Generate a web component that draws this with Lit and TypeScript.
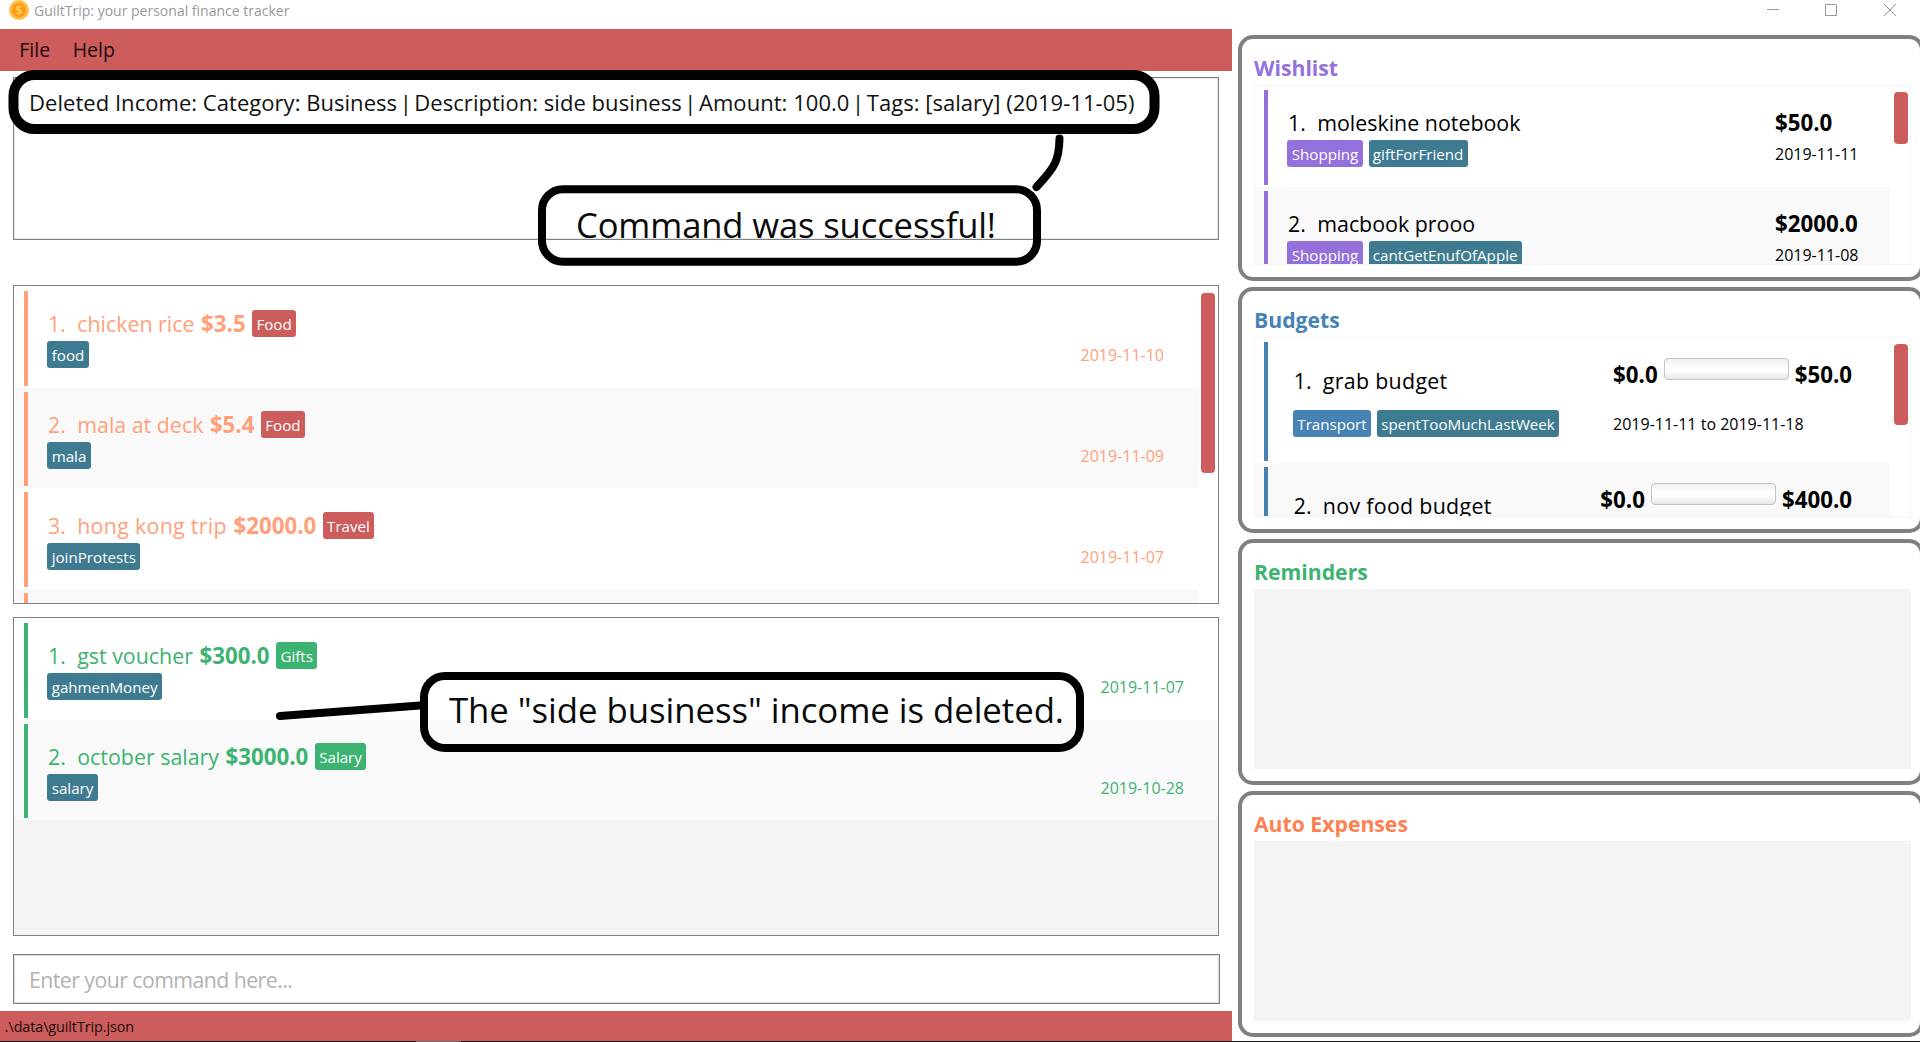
import { LitElement, html, css, svg, nothing } from "lit";
import { customElement, property } from "lit/decorators.js";
import { classMap } from "lit/directives/class-map.js";

interface Entry {
  name: string;
  price: string;
  category: string;
  tag: string;
  date: string;
  loose?: boolean;
}

interface Budget extends Entry {
  spent: string;
}

const expenses: Entry[] = [
  { name: "chicken rice", price: "$3.5", category: "Food", tag: "food", date: "2019-11-10" },
  { name: "mala at deck", price: "$5.4", category: "Food", tag: "mala", date: "2019-11-09" },
  { name: "hong kong trip", price: "$2000.0", category: "Travel", tag: "joinProtests", date: "2019-11-07", loose: true },
];

const incomes: Entry[] = [
  { name: "gst voucher", price: "$300.0", category: "Gifts", tag: "gahmenMoney", date: "2019-11-07" },
  { name: "october salary", price: "$3000.0", category: "Salary", tag: "salary", date: "2019-10-28" },
];

const wishes: Entry[] = [
  { name: "moleskine notebook", price: "$50.0", category: "Shopping", tag: "giftForFriend", date: "2019-11-11" },
  { name: "macbook prooo", price: "$2000.0", category: "Shopping", tag: "cantGetEnufOfApple", date: "2019-11-08" },
];

const budgets: Budget[] = [
  { name: "grab budget", spent: "$0.0", price: "$50.0", category: "Transport", tag: "spentTooMuchLastWeek", date: "2019-11-11 to 2019-11-18", loose: true },
  { name: "nov food budget", spent: "$0.0", price: "$400.0", category: "", tag: "", date: "", loose: true },
];

const resultParts = [
  "Deleted Income: Category: Business ",
  " Description: side business ",
  " Amount: 100.0 ",
  " Tags: [salary] (2019-11-05)",
];

const cardStyles = css`
  .row {
    display: flex;
    box-sizing: border-box;
    flex: none;
    height: 100.67px;
    padding: 4px 0 2px 10px;
    background: #fff;
    color: var(--accent);
  }
  .row.even {
    background: #f9f9f9;
  }
  .bar {
    flex: none;
    width: 4px;
    background: var(--accent);
  }
  .body {
    flex: 1;
    display: flex;
    flex-direction: column;
    gap: 4px;
    padding: 19.3px 0 0 19.4px;
  }
  .line {
    display: flex;
    height: 27px;
    line-height: 27px;
    white-space: pre;
  }
  .num {
    box-sizing: border-box;
    width: 29.8px;
    padding-left: 0.7px;
    font-size: 21.3px;
  }
  .name {
    font-size: 21.4px;
  }
  .name.loose {
    letter-spacing: 0.3px;
  }
  .price {
    font-size: 22.3px;
    font-weight: 700;
  }
  .tag {
    box-sizing: border-box;
    height: 27px;
    padding: 0 4.3px;
    border-radius: 3px;
    background: #3e7b91;
    color: #fff;
    font-size: 15.15px;
    line-height: 29px;
  }
  .tag.cat {
    background: var(--cat);
  }
  .date {
    font-size: 16px;
    line-height: 28.6px;
  }
`;

@customElement("entry-row")
class EntryRow extends LitElement {
  @property({ attribute: false }) entry!: Entry;
  @property({ type: Number }) index = 1;

  static styles = [
    cardStyles,
    css`
      :host {
        display: block;
        flex: none;
      }
      .line {
        gap: 6.5px;
      }
      .num {
        margin-right: -6.5px;
      }
      .date {
        margin: 0 34px 0 auto;
      }
    `,
  ];

  render() {
    const e = this.entry;
    return html`<div class=${classMap({ row: true, even: this.index % 2 === 0 })}>
      <div class="bar"></div>
      ${e.name
        ? html`<div class="body">
            <div class="line">
              <span class="num">${this.index}.</span><span class=${classMap({ name: true, loose: !!e.loose })}>${e.name}</span
              ><span class="price">${e.price}</span><span class="tag cat">${e.category}</span>
            </div>
            <div class="line"><span class="tag">${e.tag}</span><span class="date">${e.date}</span></div>
          </div>`
        : nothing}
    </div>`;
  }
}

@customElement("wish-row")
class WishRow extends LitElement {
  @property({ attribute: false }) entry!: Entry;
  @property({ type: Number }) index = 1;

  static styles = [
    cardStyles,
    css`
      :host {
        display: block;
        flex: none;
      }
      .row {
        height: 101px;
        padding-left: 9px;
      }
      .line {
        gap: 6px;
        color: #000;
      }
      .num {
        margin-right: -6px;
      }
      .side {
        flex: none;
        width: 115px;
        padding-left: 0;
      }
    `,
  ];

  render() {
    const e = this.entry;
    return html`<div class=${classMap({ row: true, even: this.index % 2 === 0 })}>
      <div class="bar"></div>
      <div class="body">
        <div class="line"><span class="num">${this.index}.</span><span class="name">${e.name}</span></div>
        <div class="line"><span class="tag cat">${e.category}</span><span class="tag">${e.tag}</span></div>
      </div>
      <div class="body side">
        <div class="line"><span class="price">${e.price}</span></div>
        <div class="line"><span class="date">${e.date}</span></div>
      </div>
    </div>`;
  }
}

@customElement("budget-row")
class BudgetRow extends LitElement {
  @property({ attribute: false }) entry!: Budget;
  @property({ type: Number }) index = 1;

  static styles = [
    cardStyles,
    css`
      :host {
        display: block;
        flex: none;
      }
      .row {
        height: 125px;
        padding-left: 9px;
      }
      .body {
        gap: 16px;
        padding: 25px 0 0 25px;
      }
      .line {
        gap: 6px;
        color: #000;
      }
      .num {
        margin-right: -6px;
      }
      .side {
        flex: none;
        gap: 22.5px;
        padding: 18.5px 38px 0 0;
      }
      .meter {
        width: 123px;
        height: 20px;
        margin-top: -2.5px;
        border: 1px solid #c4c4c4;
        border-radius: 4px;
        background: linear-gradient(#efefef, #fff 45%, #fdfdfd 60%, #e6e6e6);
      }
    `,
  ];

  render() {
    const e = this.entry;
    return html`<div class=${classMap({ row: true, even: this.index % 2 === 0 })}>
      <div class="bar"></div>
      <div class="body">
        <div class="line">
          <span class="num">${this.index}.</span><span class=${classMap({ name: true, loose: !!e.loose })}>${e.name}</span>
        </div>
        ${e.category
          ? html`<div class="line"><span class="tag cat">${e.category}</span><span class="tag">${e.tag}</span></div>`
          : nothing}
      </div>
      <div class="body side">
        <div class="line">
          <span class="price">${e.spent}</span><span class="meter"></span><span class="price">${e.price}</span>
        </div>
        <div class="line"><span class="date">${e.date}</span></div>
      </div>
    </div>`;
  }
}

@customElement("app-root")
class AppRoot extends LitElement {
  static styles = css`
    :host {
      position: relative;
      display: flex;
      flex-direction: column;
      box-sizing: border-box;
      width: 1920px;
      height: 1042px;
      overflow: hidden;
      background: #fff;
      color: #000;
      font-family: "Open Sans", "Noto Sans", sans-serif;
    }
    .titlebar {
      flex: none;
      display: flex;
      height: 29px;
      padding-left: 9px;
      color: #999;
      font-size: 14px;
      line-height: 21px;
    }
    .coin {
      width: 20px;
      height: 20px;
      margin-right: 5px;
    }
    .controls {
      width: 131px;
      height: 20px;
      margin: 0 23px 0 auto;
    }
    .main {
      flex: none;
      display: flex;
      height: 1012px;
    }
    .left {
      flex: none;
      display: flex;
      flex-direction: column;
      width: 1232px;
    }
    .menubar {
      display: flex;
      gap: 22.5px;
      height: 42px;
      padding-left: 19.3px;
      background: #cd5c5c;
      color: #1c0b0b;
      font-size: 19.5px;
      line-height: 42px;
    }
    .result,
    .list,
    .command {
      box-sizing: border-box;
      margin-left: 13px;
      width: 1206px;
      border: 1px solid #808080;
    }
    .result {
      height: 163px;
      margin-top: 6px;
      padding: 0 0 0 15px;
      box-shadow: inset 0 0 0 1px #e8e8e8;
      color: #111;
      font-size: 22px;
      line-height: 48px;
      letter-spacing: 0.04px;
      white-space: pre;
    }
    .sep {
      margin: 0 -3.2px;
    }
    .list {
      display: flex;
      height: 319px;
      padding-top: 1px;
      overflow: hidden;
    }
    .rows {
      flex: 1;
      display: flex;
      flex-direction: column;
      overflow: hidden;
      background: #f4f4f4;
    }
    .scroll {
      flex: none;
      width: 20px;
      padding: 6px 3px 0 3px;
      box-sizing: border-box;
    }
    .panel .scroll {
      padding: 6px 2px 0 4px;
    }
    .thumb {
      border-radius: 4px;
      background: #cd5c5c;
    }
    .thumb.expense {
      height: 180px;
    }
    .thumb.wish {
      height: 52px;
    }
    .thumb.budget {
      height: 81px;
    }
    .expenses {
      --accent: #ffa07a;
      --cat: #cd5c5c;
      margin-top: 45px;
    }
    .incomes {
      --accent: #3cb371;
      --cat: #3cb371;
      margin-top: 13px;
    }
    .command {
      width: 1207px;
      height: 50px;
      margin-top: 18px;
      padding-left: 15px;
      box-shadow: inset 0 0 0 1px #dcdcdc;
      color: #b2b2b2;
      font-size: 21.3px;
      line-height: 49px;
      letter-spacing: -0.56px;
    }
    .status {
      height: 30px;
      margin-top: 7px;
      padding-left: 4.8px;
      background: #cd5c5c;
      color: #1c0b0b;
      font-size: 14.4px;
      line-height: 31px;
      letter-spacing: -0.1px;
    }
    .right {
      flex: none;
      display: flex;
      flex-direction: column;
      gap: 6px;
      padding: 6px 0 0 6px;
    }
    .panel {
      box-sizing: border-box;
      width: 686px;
      height: 246px;
      padding: 10px 9px 12px 12px;
      border: 4px solid #808080;
      border-radius: 15px;
    }
    .panel h2 {
      margin: 0;
      height: 36px;
      color: var(--head);
      font-size: 21.2px;
      font-weight: 700;
      line-height: 37px;
    }
    .panel .box {
      display: flex;
      box-sizing: border-box;
      width: 657px;
      height: 180px;
      border: 1px solid #f4f4f4;
      overflow: hidden;
    }
    .panel .box.empty {
      background: #f4f4f4;
    }
    .wishlist {
      --head: #9370db;
      --accent: #9370db;
      --cat: #9370db;
    }
    .budgets {
      --head: #4682b4;
      --accent: #4682b4;
      --cat: #4682b4;
    }
    .reminders {
      --head: #3cb371;
    }
    .auto {
      --head: #ff7f50;
    }
    .taskbar {
      flex: none;
      height: 1px;
      padding-left: 416px;
      background: #1a1a1a;
    }
    .active {
      width: 45px;
      height: 1px;
      background: #6a6a6a;
    }
    .notes {
      position: absolute;
      left: 0;
      top: 0;
      font-family: inherit;
    }
  `;

  private panel(kind: string, title: string, rows?: unknown) {
    return html`<section class="panel ${kind}">
      <h2>${title}</h2>
      <div class="box ${rows ? "" : "empty"}">${rows ?? nothing}</div>
    </section>`;
  }

  private notes() {
    return svg`<svg class="notes" width="1920" height="1041" viewBox="0 0 1920 1041" fill="none" stroke="#000" stroke-linecap="round">
      <rect x="13.5" y="75" width="1141" height="54" rx="21" stroke-width="10"/>
      <rect x="542" y="189.3" width="495" height="72.4" rx="21" stroke-width="8"/>
      <rect x="424" y="676" width="656" height="72" rx="21" stroke-width="8"/>
      <path d="M1059.5 138.5C1059 160 1055.5 167 1036.5 187" stroke-width="8"/>
      <path d="M280 716L420 705.5" stroke-width="8"/>
      <text x="576" y="238" font-size="34.6" textLength="420" fill="#0a0a0a" stroke="none">Command was successful!</text>
      <text x="449" y="722.5" font-size="34.8" textLength="615" fill="#0a0a0a" stroke="none">The "side business" income is deleted.</text>
    </svg>`;
  }

  render() {
    const more: Entry = { name: "", price: "", category: "", tag: "", date: "" };
    return html`
      <header class="titlebar">
        <svg class="coin" viewBox="0 0 20 20">
          <circle cx="10" cy="10" r="10" fill="#ffbe3d" />
          <circle cx="10" cy="10" r="7.2" fill="#ff9a1f" />
          <text x="10" y="14.5" font-size="12.5" font-weight="700" text-anchor="middle" fill="#ffd04f">$</text>
        </svg>
        <span>GuiltTrip: your personal finance tracker</span>
        <svg class="controls" viewBox="0 0 131 20" fill="none" stroke="#999">
          <path d="M1 9.5H13M59.5 4.5H70.5V15.5H59.5ZM118 4L130 16M130 4L118 16" />
        </svg>
      </header>
      <div class="main">
        <div class="left">
          <nav class="menubar"><span>File</span><span>Help</span></nav>
          <div class="result">${resultParts.map((p, i) => html`${i ? html`<span class="sep">|</span>` : nothing}${p}`)}</div>
          <div class="list expenses">
            <div class="rows">
              ${[...expenses, more].map((e, i) => html`<entry-row .entry=${e} .index=${i + 1}></entry-row>`)}
            </div>
            <div class="scroll"><div class="thumb expense"></div></div>
          </div>
          <div class="list incomes">
            <div class="rows">
              ${incomes.map((e, i) => html`<entry-row .entry=${e} .index=${i + 1}></entry-row>`)}
            </div>
          </div>
          <div class="command">Enter your command here...</div>
          <footer class="status">.\\data\\guiltTrip.json</footer>
        </div>
        <div class="right">
          ${this.panel(
            "wishlist",
            "Wishlist",
            html`<div class="rows">${wishes.map((e, i) => html`<wish-row .entry=${e} .index=${i + 1}></wish-row>`)}</div>
              <div class="scroll"><div class="thumb wish"></div></div>`
          )}
          ${this.panel(
            "budgets",
            "Budgets",
            html`<div class="rows">${budgets.map((e, i) => html`<budget-row .entry=${e} .index=${i + 1}></budget-row>`)}</div>
              <div class="scroll"><div class="thumb budget"></div></div>`
          )}
          ${this.panel("reminders", "Reminders")} ${this.panel("auto", "Auto Expenses")}
        </div>
      </div>
      <div class="taskbar"><div class="active"></div></div>
      ${this.notes()}
    `;
  }
}
